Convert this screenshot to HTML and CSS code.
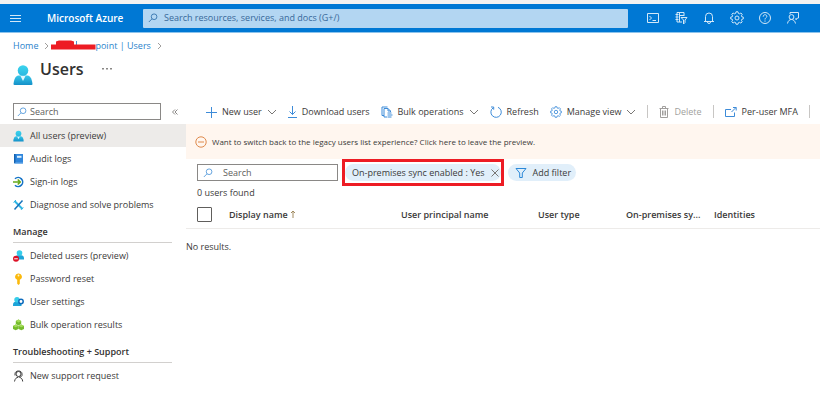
FILE: index.html
```html
<!DOCTYPE html>
<html lang="en">

<head>
  <meta charset="UTF-8" />
  <meta name="viewport" content="width=device-width, initial-scale=1.0" />
  <title>Users - Microsoft Azure</title>
  <link rel="stylesheet" href="styles.css">
</head>

<body>

  <!-- Shared icons -->
  <svg class="sprite" aria-hidden="true">
    <defs>
      <linearGradient id="g-head" x1="0" y1="0" x2="0" y2="1"><stop offset="0" stop-color="#3bd4ee" /><stop offset="1" stop-color="#2cb8e0" /></linearGradient>
      <linearGradient id="g-body" x1="0" y1="0" x2="0" y2="1"><stop offset="0" stop-color="#38c8ea" /><stop offset="1" stop-color="#1490c8" /></linearGradient>
    </defs>
    <symbol id="i-search" viewBox="0 0 12 12"><circle cx="7.3" cy="4.5" r="3.4" /><path d="M4.8 7 1 10.8" /></symbol>
    <symbol id="i-chevron" viewBox="0 0 10 6"><path d="M1 1l4 4 4-4" /></symbol>
    <symbol id="i-gear" viewBox="0 0 14 14">
      <circle cx="7" cy="7" r="2" />
      <path d="M6 .8h2l.4 1.6 1 .4 1.5-.8 1.3 1.3-.8 1.5.4 1 1.5.3v1.8l-1.5.4-.4 1 .8 1.5-1.3 1.3-1.5-.8-1 .4L8 13.2H6l-.4-1.6-1-.4-1.5.8-1.3-1.3.8-1.5-.4-1L.7 7.9V6.1l1.5-.3.4-1-.8-1.5L3.1 2l1.5.8 1-.4z" />
    </symbol>
    <symbol id="i-user" viewBox="0 0 20 22">
      <path d="M1.500 21Q.5 21 .5 20C1 16 2 12 5.500 11.500h9C18 12 19 16 19.500 20q0 1-1 1z" fill="url(#g-body)" />
      <path d="M7.500 12h5L10 17z" fill="#e3f7fd" />
      <circle cx="10" cy="6.500" r="5.300" fill="url(#g-head)" />
    </symbol>
  </svg>

  <!-- Top bar -->
  <header class="topbar">
    <button class="topbar-menu" aria-label="Menu">
      <svg class="line" width="11" height="9" viewBox="0 0 11 9"><path d="M0 1.500h11M0 4.500h11M0 7.500h11" /></svg>
    </button>
    <a class="brand" href="#">Microsoft Azure</a>
    <label class="topbar-search">
      <svg class="line" width="10" height="10"><use href="#i-search" /></svg>
      <input type="text" aria-label="Search resources" placeholder="Search resources, services, and docs (G+/)">
    </label>
    <div class="topbar-icons">
      <button aria-label="Cloud Shell">
        <svg class="line" width="14" height="14" viewBox="0 0 14 14"><path d="M1.500 2.500h11v9h-11zM3.500 5l2 2-2 2M6.500 9.500H10" /></svg>
      </button>
      <button aria-label="Directories">
        <svg class="line" width="14" height="14" viewBox="0 0 14 14"><path d="M10 5V1.500H3V11h5M1.500 3.500h3M1.500 6h3M1.500 8.500h3M5.500 1.500V11M6 4.500h4M7 6.500h6L11 9v2.500L9.500 13V9z" /></svg>
      </button>
      <button aria-label="Notifications">
        <svg class="line" width="14" height="14" viewBox="0 0 14 14"><path d="M3.500 10.500V5.500a3.500 3.500 0 0 1 7 0v5M2 10.500h10M5.500 11a1.500 1.500 0 0 0 3 0" /></svg>
      </button>
      <button aria-label="Settings"><svg class="line" width="14" height="14"><use href="#i-gear" /></svg></button>
      <button aria-label="Help">
        <svg class="line" width="14" height="14" viewBox="0 0 14 14"><circle cx="7" cy="7" r="5.500" /><path d="M5.200 5.700C5.200 3 9 3.200 8.800 5.500 8.700 6.700 7 6.900 7 8.500M7 9.500v1.200" /></svg>
      </button>
      <button aria-label="Feedback">
        <svg class="line" width="14" height="14" viewBox="0 0 14 14"><path d="M4 3V1.500h8.500V7h-1L10 8.800V7M1.500 12.500C2 9.800 3.500 8.500 5.500 8.500S9 10 9.500 12.500" /><circle cx="5.500" cy="6" r="2.400" /></svg>
      </button>
    </div>
  </header>

  <!-- Breadcrumb and title -->
  <nav class="breadcrumb" aria-label="Breadcrumb">
    <a href="#">Home</a>
    <svg class="line" width="5" height="8" viewBox="0 0 5 8"><path d="M1 1l3 3-3 3" /></svg>
    <a class="tenant" href="#">
      <svg class="redaction" width="46" height="12" viewBox="0 0 46 12">
        <path d="M25.500 1v5" stroke="#4a94d0" />
        <path d="M0 4.500h5V1.500L8 .500h12l3 1v3h21.500v5H0z" fill="#ed1c24" />
      </svg>point | Users</a>
    <svg class="line" width="5" height="8" viewBox="0 0 5 8"><path d="M1 1l3 3-3 3" /></svg>
  </nav>
  <div class="title">
    <svg class="title-icon" width="20" height="22"><use href="#i-user" /></svg>
    <h1>Users</h1>
    <button class="more" aria-label="More">
      <svg width="10" height="2" viewBox="0 0 10 2"><path d="M0 0h2v1.500H0zM4 0h2v1.500H4zM8 0h2v1.500H8z" fill="#8a8886" /></svg>
    </button>
  </div>

  <div class="layout">
    <!-- Sidebar -->
    <aside class="sidebar">
      <div class="sidebar-top">
        <label class="searchbox">
          <svg class="line" width="10" height="10"><use href="#i-search" /></svg>
          <input type="text" aria-label="Search menu" placeholder="Search">
        </label>
        <button class="collapse" aria-label="Collapse">
          <svg class="line" width="6" height="6" viewBox="0 0 6 6"><path d="M3 .500.500 3 3 5.500M5.500.500 3 3l2.500 2.500" /></svg>
        </button>
      </div>
      <nav class="menu">
        <a class="active" href="#"><svg width="11" height="12"><use href="#i-user" /></svg>All users (preview)</a>
        <a href="#">
          <svg width="11" height="12" viewBox="0 0 11 12"><path d="M1 1h9v10H2L1 10z" fill="#2f86dc" /><path d="M1 1h1.500v9H1z" fill="#1462b0" /><path d="M4 2.800h4.500v2H4z" fill="#d9efff" /><path d="M2 9.800h8v.700H2z" fill="#cfe6fa" /></svg>
          Audit logs</a>
        <a href="#">
          <svg width="11" height="12" viewBox="0 0 11 12" fill="none"><path d="M2 2.800A4.500 4.500 0 1 1 2 9.200" stroke="#1673c7" stroke-width="1.600" /><path d="M0 6h7M4.700 3.500 7.300 6 4.700 8.500" stroke="#66a91b" stroke-width="1.500" /></svg>
          Sign-in logs</a>
        <a href="#">
          <svg width="11" height="12" viewBox="0 0 11 12" fill="none"><path d="M1.500 2l8 8" stroke="#2fb5e4" stroke-width="2" /><path d="M9.500 1.500l-8 9" stroke="#1673bb" stroke-width="1.500" /><path d="M.500 3.500 3 1M8 10.800 10.300 8.500" stroke="#2fb5e4" /></svg>
          Diagnose and solve problems</a>
      </nav>
      <h2>Manage</h2>
      <nav class="menu">
        <a href="#">
          <svg width="11" height="12" viewBox="0 0 11 12"><path d="M2 9.500V8C2 6 3.500 5 6.500 5S11 6 11 8v1.500z" fill="#1da4d8" /><circle cx="6.500" cy="3" r="2.800" fill="#36cdea" /><circle cx="3" cy="8.800" r="3" fill="#dc1126" /><path d="M1.200 8.300h3.600v1H1.200z" fill="#fff" /></svg>
          Deleted users (preview)</a>
        <a href="#">
          <svg width="11" height="12" viewBox="0 0 11 12"><path d="M5.500.500a3.200 3.200 0 0 0-1.300 6.200v4L5.500 12l1.300-1.300v-4A3.200 3.200 0 0 0 5.500.500z" fill="#fbb90d" /><circle cx="5.500" cy="2.500" r=".900" fill="#fff3c8" /></svg>
          Password reset</a>
        <a href="#">
          <svg width="11" height="12" viewBox="0 0 11 12"><path d="M0 10V8.500C0 6.500 1.500 5.500 4 5.500s4.500 1 4.500 3V10z" fill="#1da4d8" /><circle cx="4" cy="3.700" r="2.700" fill="#36cdea" /><circle cx="8" cy="5.500" r="2.200" fill="#fff" stroke="#0f6cbd" stroke-width="1.500" /></svg>
          User settings</a>
        <a href="#">
          <svg width="11" height="12" viewBox="0 0 11 12" fill="#76bc2d"><path d="M5.500.500 8.200 2v3L5.500 6.500 2.800 5V2zM2.700 5.500l2.700 1.400v3L2.700 11.300 0 9.900v-3zM8.300 5.500 11 6.900v3l-2.700 1.400-2.700-1.400v-3z" /><path d="M5.500.500 8.200 2 5.500 3.500 2.800 2zM2.700 5.500l2.700 1.400-2.700 1.400L0 6.900zM8.300 5.500 11 6.900 8.300 8.300 5.600 6.900z" fill="#a4dc58" /></svg>
          Bulk operation results</a>
      </nav>
      <h2>Troubleshooting + Support</h2>
      <nav class="menu">
        <a href="#">
          <svg width="11" height="12" viewBox="0 0 11 12" fill="none" stroke="#404040"><circle cx="5.500" cy="4" r="2.500" /><path d="M2 5.500V3.800C2 0 9 0 9 3.800v1.700M9 5.500C8.500 7 7 7 5.500 7M1.500 11.500C2 8.500 3.500 7.500 5 7.300M6.500 7.300c2 .700 3 1.700 3.200 4.200" /></svg>
          New support request</a>
      </nav>
    </aside>

    <!-- Main content -->
    <main class="content">
      <div class="toolbar">
        <button>
          <svg class="line" width="12" height="12" viewBox="0 0 12 12"><path d="M6.500 1v11M1 6.500h11" /></svg>
          New user
          <svg class="chevron line" width="10" height="6"><use href="#i-chevron" /></svg>
        </button>
        <button>
          <svg class="line" width="9" height="12" viewBox="0 0 9 12"><path d="M4.500 0v8.500M1.500 5.500l3 3 3-3M0 11.500h9" /></svg>
          Download users
        </button>
        <button>
          <svg class="line" width="12" height="12" viewBox="0 0 12 12"><path d="M3 9.500H1V1h5.500M3 2.500h4L9.500 5v1M3 2.500V11h3M7 2.500V5h2.500M6.500 7h4M6.500 9h5M6.500 11h4" /></svg>
          Bulk operations
          <svg class="chevron line" width="10" height="6"><use href="#i-chevron" /></svg>
        </button>
        <button>
          <svg class="line" width="12" height="12" viewBox="0 0 12 12"><path d="M8 1.300A5.200 5.200 0 1 1 3.200 1.800M1 1h2.700v2.700" /></svg>
          Refresh
        </button>
        <button>
          <svg class="line" width="12" height="12"><use href="#i-gear" /></svg>
          Manage view
          <svg class="chevron line" width="10" height="6"><use href="#i-chevron" /></svg>
        </button>
        <span class="divider"></span>
        <button disabled>
          <svg class="line" width="10" height="12" viewBox="0 0 10 12"><path d="M.500 2.500h9M3.500 2V.500h3V2M1.500 2.500v9h7v-9M3.500 4.500v5M5 4.500v5M6.500 4.500v5" /></svg>
          Delete
        </button>
        <span class="divider"></span>
        <button>
          <svg class="line" width="12" height="12" viewBox="0 0 12 12"><path d="M6 3.500H.500v7h9V6.500M6.500 6l4.500-4.500M8 1.500h3.200V4.500" /></svg>
          Per-user MFA
        </button>
        <span class="divider"></span>
      </div>

      <a class="banner" href="#">
        <svg width="12" height="12" viewBox="0 0 12 12" fill="none" stroke="#df8a4d"><circle cx="6" cy="6" r="5.200" /><path d="M3 6h6" /></svg>
        Want to switch back to the legacy users list experience? Click here to leave the preview.
      </a>

      <div class="filters">
        <label class="searchbox">
          <svg class="line" width="10" height="10"><use href="#i-search" /></svg>
          <input type="text" aria-label="Search users" placeholder="Search">
        </label>
        <div class="highlight">
          <button class="pill">
            On-premises sync enabled : Yes
            <svg class="line" width="8" height="8" viewBox="0 0 8 8"><path d="M.500.500l7 7M7.500.500l-7 7" /></svg>
          </button>
        </div>
        <button class="pill add-filter">
          <svg class="line" width="12" height="10" viewBox="0 0 12 10"><path d="M1 .500h10L7.300 5v4.500H4.700V5z" /></svg>
          Add filter
        </button>
      </div>

      <p class="count">0 users found</p>

      <table>
        <thead>
          <tr>
            <th class="col-check"><input type="checkbox" aria-label="Select all"></th>
            <th class="col-name">Display name <svg class="line" width="6" height="8" viewBox="0 0 6 8"><path d="M3 8V1M1 3l2-2 2 2" /></svg></th>
            <th class="col-principal">User principal name</th>
            <th class="col-type">User type</th>
            <th class="col-sync">On-premises sy...</th>
            <th>Identities</th>
          </tr>
        </thead>
        <tbody>
          <tr>
            <td colspan="6">No results.</td>
          </tr>
        </tbody>
      </table>
    </main>
  </div>

</body>

</html>
```

FILE: styles.css
```css
* {
  box-sizing: border-box;
}

body {
  margin: 0;
  border-top: 4px solid #f3f2f1;
  font-family: "Segoe UI", "Open Sans", sans-serif;
  font-size: 9px;
  line-height: 12px;
  color: #3b3a39;
  background: #fff;
}

a {
  color: inherit;
  text-decoration: none;
}

button {
  display: flex;
  align-items: center;
  padding: 0;
  border: none;
  background: transparent;
  font: inherit;
  color: inherit;
  white-space: nowrap;
  cursor: pointer;
}

input {
  font: inherit;
  color: inherit;
}

svg {
  flex: none;
}

.sprite {
  position: absolute;
  width: 0;
  height: 0;
}

.line {
  fill: none;
  stroke: currentColor;
  stroke-width: 1;
}

/* Top bar */
.topbar {
  display: flex;
  align-items: center;
  height: 29px;
  padding: 0 19px 0 10px;
  background: #0078d4;
  border-bottom: 1px solid #8cc3ec;
  color: #d3e8f8;
}

.brand {
  width: 96px;
  margin-left: 26px;
  font-size: 10px;
  font-weight: 600;
  color: #fff;
  white-space: nowrap;
}

.topbar-search {
  display: flex;
  flex: 1;
  align-items: center;
  gap: 6px;
  height: 19px;
  padding: 0 5px;
  border-radius: 1px;
  background: #b3d6f2;
  color: #2b6ca8;
}

.topbar-search input,
.searchbox input {
  flex: 1;
  min-width: 0;
  padding: 0;
  border: none;
  outline: none;
  background: transparent;
}

.topbar-search input::placeholder {
  color: #38699a;
}

.topbar-icons {
  display: flex;
  gap: 14px;
  margin: 0 1px 0 18px;
}

/* Breadcrumb and title */
.breadcrumb {
  display: flex;
  align-items: center;
  gap: 6px;
  padding: 7px 13px 0;
  color: #2b83cb;
}

.breadcrumb .line {
  color: #a19f9d;
}

.tenant {
  position: relative;
  margin-left: -4px;
  padding-left: 44px;
}

.redaction {
  position: absolute;
  top: 0;
  left: 0;
}

.title {
  display: flex;
  align-items: center;
  height: 34px;
  padding: 0 13px;
}

.title-icon {
  margin-top: 11px;
}

.title h1 {
  margin: 0 18px 0 7px;
  font-size: 16px;
  line-height: 24px;
  font-weight: 600;
  color: #323130;
}

/* Page layout */
.layout {
  display: flex;
  margin-top: 13px;
}

.sidebar {
  flex: none;
  width: 186px;
}

.sidebar-top {
  display: flex;
  align-items: center;
  gap: 11px;
  height: 25px;
  padding-left: 13px;
}

.collapse {
  color: #8a8886;
}

.searchbox {
  display: flex;
  align-items: center;
  gap: 3px;
  width: 148px;
  height: 17px;
  padding: 0 3px;
  border: 1px solid #8a8886;
  color: #4a94d8;
}

.searchbox input::placeholder {
  color: #605e5c;
}

.menu a {
  display: flex;
  align-items: center;
  gap: 6px;
  height: 23px;
  padding-left: 13px;
}

.menu .active {
  background: #edebe9;
}

.sidebar h2 {
  margin: 4px 14px 1px 13px;
  padding: 6px 0 4px;
  border-bottom: 1px solid #d2d0ce;
  font-size: 9px;
  line-height: 12px;
  font-weight: 600;
  color: #323130;
}

/* Toolbar */
.content {
  flex: 1;
  min-width: 0;
}

.toolbar {
  display: flex;
  align-items: center;
  gap: 11px;
  height: 25px;
  padding-left: 19px;
}

.toolbar button {
  gap: 5px;
}

.toolbar .line {
  color: #3d8bd8;
}

.toolbar .chevron {
  color: #797775;
}

.toolbar button:disabled,
.toolbar button:disabled .line {
  color: #a19f9d;
}

.divider {
  width: 1px;
  height: 13px;
  background: #c8c6c4;
}

.banner {
  display: flex;
  align-items: center;
  gap: 5px;
  height: 35px;
  padding-left: 9px;
  background: #fff6ef;
  font-size: 8px;
}

/* Filters */
.filters {
  display: flex;
  align-items: center;
  gap: 4px;
  padding: 0 0 0 11px;
}

.filters .searchbox {
  gap: 10px;
  width: 141px;
  padding: 0 5px;
}

.highlight {
  border: 3px solid #ed1c24;
  padding: 2px 0;
}

.pill {
  gap: 6px;
  height: 17px;
  padding: 0 2px 0 7px;
  border-radius: 9px;
  background: #e1effa;
}

.pill .line {
  color: #797775;
}

.add-filter {
  padding-right: 5px;
}

.add-filter .line {
  color: #2b88d8;
}

.count {
  margin: 1px 0 8px 11px;
}

/* Users table */
table {
  width: 100%;
  table-layout: fixed;
  border-collapse: collapse;
}

th {
  padding: 0 4px 6px 0;
  border-bottom: 1px solid #edebe9;
  text-align: left;
  vertical-align: top;
  white-space: nowrap;
  font-weight: 600;
  line-height: 15px;
}

th .line {
  color: #a08a60;
}

th input {
  display: block;
  width: 15px;
  height: 15px;
  margin: 0 0 0 11px;
  border: 1px solid #605e5c;
  border-radius: 1px;
  appearance: none;
}

.col-check {
  width: 43px;
}

.col-name {
  width: 172px;
}

.col-principal {
  width: 137px;
}

.col-type,
.col-sync {
  width: 88px;
}

td {
  padding: 12px 0;
}
```
